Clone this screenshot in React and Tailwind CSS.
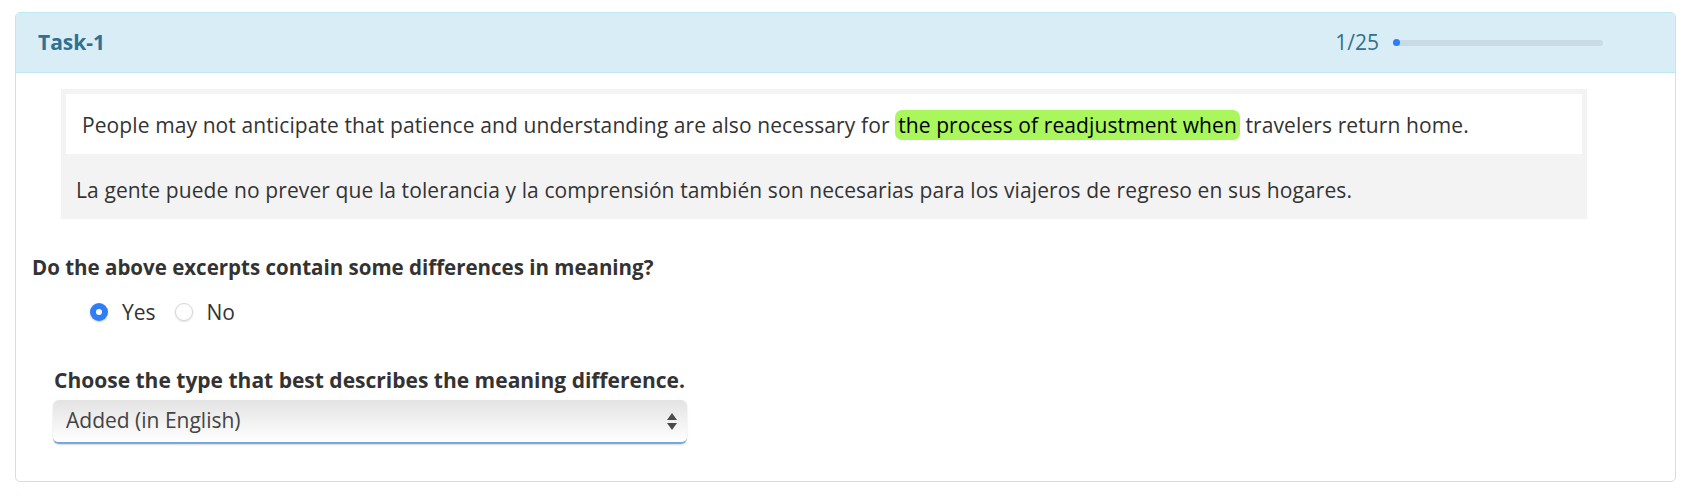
import React from "react";

const font = { fontFamily: '"Open Sans", "Noto Sans", sans-serif' };

const Radio = ({ checked, label }) => (
  <label className="flex items-center">
    {checked ? (
      <span className="w-[18px] h-[18px] rounded-full bg-[#2f7ef5] flex items-center justify-center shadow-[0_1px_2px_rgba(0,0,0,0.2)]">
        <span className="w-[6px] h-[6px] rounded-full bg-white" />
      </span>
    ) : (
      <span className="w-[18px] h-[18px] rounded-full bg-white border border-[#d6d6d6] shadow-[0_1px_2px_rgba(0,0,0,0.12)]" />
    )}
    <span className="ml-[14px] text-[21px] leading-[28px] text-[#333]">{label}</span>
  </label>
);

export default function App() {
  return (
    <div className="bg-white min-h-screen pt-[12px] pl-[15px] pr-[12px]" style={font}>
      <div className="border border-[#bce8f1] rounded-[5px] bg-white overflow-hidden">
        <div className="h-[60px] bg-[#d9edf7] border-b border-[#bce8f1] flex items-center pl-[22px] pr-[72px]">
          <span className="text-[21px] font-bold text-[#31708f]">Task-1</span>
          <div className="ml-auto flex items-center">
            <span className="text-[21px] text-[#31708f]">1/25</span>
            <div className="ml-[14px] w-[210px] h-[6px] rounded-full bg-[#c9dbe4] relative">
              <div className="absolute left-0 top-[-0.5px] w-[7px] h-[7px] rounded-full bg-[#2e7cf6]" />
            </div>
          </div>
        </div>

        <div className="pt-[16px] pl-[16px] pb-[37px]">
          <div className="ml-[29px] w-[1526px] bg-[#f3f3f3] p-[5px] pb-0">
            <div className="bg-white h-[60px] pt-[17px] pl-[16px] text-[21px] leading-[28px] tracking-[0.1px] text-[#333]">
              People may not anticipate that patience and understanding are also necessary for{" "}
              <span className="bg-[#a9f75c] text-black rounded-[7px] px-[3px] py-[1px]">
                the process of readjustment when
              </span>{" "}
              travelers return home.
            </div>
            <div className="h-[65px] pt-[22px] pl-[10px] text-[21px] leading-[28px] tracking-[0.1px] text-[#333]">
              La gente puede no prever que la tolerancia y la comprensión también son necesarias para los viajeros de regreso en sus hogares.
            </div>
          </div>

          <div className="mt-[34px] text-[20.5px] leading-[28px] font-bold text-[#333]">
            Do the above excerpts contain some differences in meaning?
          </div>

          <div className="mt-[17px] ml-[58px] flex items-center gap-[19px] h-[28px]">
            <Radio checked label="Yes" />
            <Radio label="No" />
          </div>

          <div className="mt-[40px] ml-[22px] text-[21px] leading-[28px] font-bold text-[#333]">
            Choose the type that best describes the meaning difference.
          </div>

          <div className="mt-[6px] ml-[21px] w-[634px] h-[44px] rounded-[6px] bg-gradient-to-b from-[#e3e3e3] to-white border-b-2 border-[#74a9de] shadow-[0_1px_2px_rgba(0,0,0,0.15)] flex items-center pl-[13px] pr-[10px]">
            <span className="text-[21px] text-[#444]">Added (in English)</span>
            <div className="ml-auto flex flex-col items-center gap-[3px]">
              <svg width="10" height="7" viewBox="0 0 10 7"><path d="M5 0 L10 7 L0 7 Z" fill="#4a4a4a" /></svg>
              <svg width="10" height="7" viewBox="0 0 10 7"><path d="M0 0 L10 0 L5 7 Z" fill="#4a4a4a" /></svg>
            </div>
          </div>
        </div>
      </div>
    </div>
  );
}
